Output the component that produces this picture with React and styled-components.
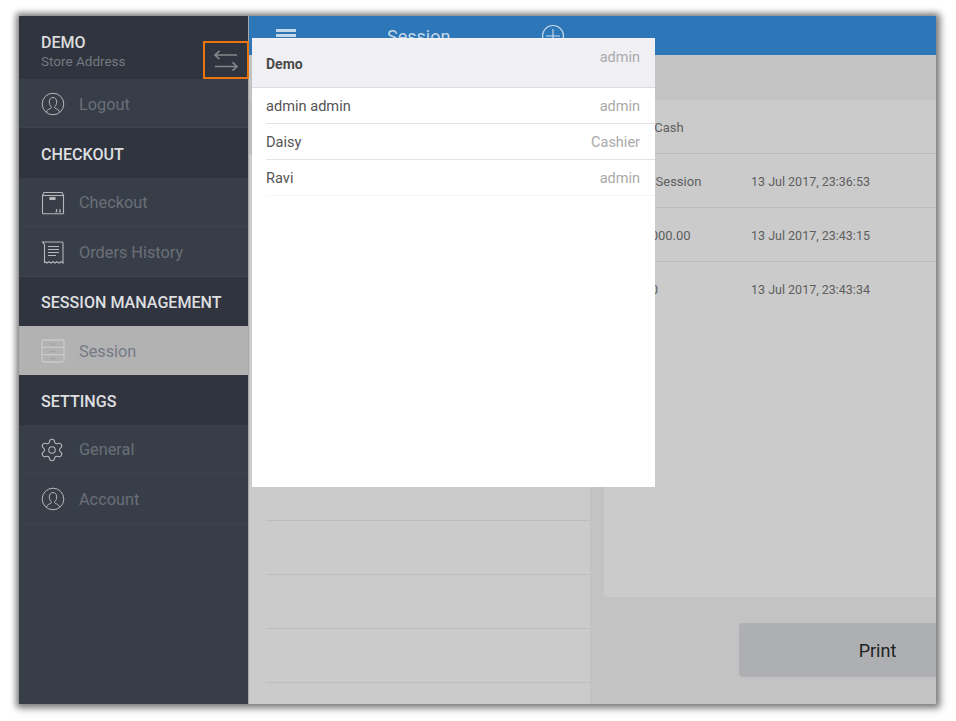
import React from "react";
import styled, { createGlobalStyle } from "styled-components";
import { Settings } from "lucide-react";

const Global = createGlobalStyle`
  html, body { margin: 0; padding: 0; background: #fff; }
  body { font-family: "Roboto", "Liberation Sans", sans-serif; }
`;
const Page = styled.div`
  width: 956px;
  height: 721px;
  padding: 16px 20px 17px 19px;
  box-sizing: border-box;
  overflow: hidden;
`;
const Frame = styled.div`
  position: relative;
  display: flex;
  height: 688px;
  box-shadow: 0 0 6px 3px rgba(0, 0, 0, 0.38), 2px 2px 8px 3px rgba(0, 0, 0, 0.26);
`;
const Sidebar = styled.aside`
  width: 229px;
  flex: none;
  background: #383e48;
  border-right: 1px solid #a8a8a8;
`;
const StoreHead = styled.div`
  height: 63px;
  box-sizing: border-box;
  padding: 17px 22px 0;
  background: #2f343e;
`;
const StoreName = styled.div`
  font-size: 16px;
  line-height: 19px;
  font-weight: 500;
  color: #dcdcdc;
`;
const StoreAddress = styled.div`
  font-size: 13.5px;
  line-height: 19px;
  color: #747981;
`;
const SwitchBox = styled.div`
  position: absolute;
  left: 184px;
  top: 25px;
  width: 46px;
  height: 38px;
  box-sizing: border-box;
  border: 2px solid #e8750f;
  display: flex;
  align-items: center;
  justify-content: center;
  z-index: 3;
`;
const Section = styled.div`
  height: 49.4px;
  box-sizing: border-box;
  padding: 2px 0 0 22px;
  display: flex;
  align-items: center;
  background: #2f343e;
  color: #dedfe0;
  font-size: 16.1px;
  font-weight: 500;
`;
const Item = styled.div`
  height: 49.4px;
  box-sizing: border-box;
  padding: 2px 0 0 22px;
  display: flex;
  align-items: center;
  gap: 14px;
  background: ${(p) => (p.$active ? "#b2b2b2" : "#383e48")};
  border-bottom: 1px solid ${(p) => (p.$active ? "#b2b2b2" : "#3e444e")};
  color: ${(p) => (p.$active ? "#757a84" : "#6a6f78")};
  font-size: 16.3px;
  svg { flex: none; color: ${(p) => (p.$active ? "#cacaca" : "#b4b6b9")}; }
`;
const Main = styled.main`
  flex: 1;
  min-width: 0;
  display: flex;
  flex-direction: column;
  background: #c3c3c3;
`;
const TopBar = styled.header`
  height: 39px;
  flex: none;
  display: flex;
  background: #2d76b8;
  position: relative;
`;
const MenuBars = styled.div`
  position: absolute;
  left: 27px;
  top: 13px;
  width: 20px;
  height: 10px;
  background: repeating-linear-gradient(#c5d8ea 0 3px, #2d76b8 3px 5px);
`;
const Title = styled.div`
  position: absolute;
  left: 138px;
  top: 10px;
  font-size: 18px;
  line-height: 22px;
  color: #c3d6e8;
`;
const AddIcon = styled.svg`
  position: absolute;
  left: 292px;
  top: 8px;
`;
const SubBar = styled.div`
  height: 45px;
  flex: none;
`;
const Body = styled.div`
  flex: 1;
  min-height: 0;
  display: flex;
`;
const SessionList = styled.div`
  width: 341px;
  flex: none;
  padding-left: 17px;
  box-sizing: border-box;
  background: #cbcbcb;
  overflow: hidden;
`;
const ListRow = styled.div`
  height: 54px;
  box-sizing: border-box;
  border-bottom: 1px solid #bdbdbd;
  &:first-child {
    margin-left: -17px;
    background: #bdbdbd;
  }
  &:nth-child(2) { height: 43px; }
`;
const Detail = styled.div`
  flex: 1;
  min-width: 0;
  display: flex;
  flex-direction: column;
  padding-left: 13px;
  border-left: 1px solid #c0c0c2;
  overflow: hidden;
`;
const DetailPanel = styled.div`
  height: 497px;
  background: #cbcbcb;
  border-radius: 4px 0 0 4px;
`;
const DetailRow = styled.div`
  height: 54px;
  box-sizing: border-box;
  padding: 1px 0 0 18px;
  display: grid;
  grid-template-columns: 129px 1fr;
  align-items: center;
  border-bottom: 1px solid #bcbcbc;
  font-size: 12.5px;
  color: #5e5e5e;
  &:last-child { border-bottom: 0; }
`;
const RowLabel = styled.span`
  font-size: 13px;
`;
const PrintWrap = styled.div`
  padding: 26px 0 0 135px;
`;
const PrintButton = styled.div`
  height: 54px;
  margin-right: -80px;
  background: #aeafb2;
  border-radius: 4px 0 0 4px;
  display: flex;
  align-items: center;
  justify-content: center;
  font-size: 18px;
  color: #222;
`;
const Popover = styled.div`
  position: absolute;
  left: 233px;
  top: 22px;
  width: 403px;
  height: 449px;
  background: #fff;
  z-index: 2;
  border-top: 1px solid #f4f4f6;
  box-sizing: border-box;
`;
const PopHead = styled.div`
  height: 49px;
  box-sizing: border-box;
  padding: 0 15px 0 14px;
  display: flex;
  justify-content: space-between;
  background: #efeff4;
  border-bottom: 1px solid #dcdce0;
`;
const PopName = styled.span`
  font-size: 14px;
  font-weight: 700;
  color: #4a4a4a;
  line-height: 50px;
`;
const PopRows = styled.div`
  padding-left: 14px;
`;
const PopRow = styled.div`
  height: 36px;
  box-sizing: border-box;
  padding: 1px 15px 0 0;
  display: flex;
  align-items: center;
  justify-content: space-between;
  border-bottom: 1px solid ${(p) => (p.$last ? "#f6f6f6" : "#e3e3e3")};
  font-size: 14.6px;
  color: #555;
`;
const Role = styled.span`
  font-size: 14.5px;
  color: #aaa;
  line-height: ${(p) => (p.$head ? "37px" : "normal")};
`;
const GearIcon = styled(Settings)`
  margin: -1px 0 -1px -2px;
`;

const UserIcon = () => (
  <svg width="24" height="24" viewBox="0 0 24 24" fill="none" stroke="currentColor" strokeWidth="1">
    <circle cx="12" cy="12" r="10.8" />
    <path d="M5.5 20c.6-2.3 2.4-2.9 4.300-3.600.6-.3.8-1 .4-1.600-1.300-1.500-1.900-3-1.900-4.900C8.300 7.300 9.900 5.500 12 5.500s3.700 1.800 3.700 4.400c0 1.900-.6 3.400-1.900 4.900-.4.6-.2 1.300.4 1.600 1.900.7 3.700 1.300 4.300 3.600" />
  </svg>
);
const BoxIcon = () => (
  <svg width="24" height="24" viewBox="0 0 24 24" fill="none" stroke="currentColor" strokeWidth="1.100">
    <path d="M1.500 4.500 3 1.500h18l1.500 3v17.500a.8.800 0 0 1-.8.800H2.300a.8.800 0 0 1-.8-.8z" />
    <path d="M1.500 4.500h21" />
    <path d="M9 6.500h5v2H9z" fill="currentColor" />
    <path d="M15.500 18v2.500M19 18v2.500M14.500 20.800h2M18 20.800h2" />
  </svg>
);
const ReceiptIcon = () => (
  <svg width="24" height="24" viewBox="0 0 24 24" fill="none" stroke="currentColor" strokeWidth="1.100">
    <path d="M1.500 2h19.500a1 1 0 0 1 1 1v20l-2-1.300-2 1.300-2-1.300-2 1.300-2-1.300-2 1.300-2-1.300-2 1.300-2-1.300L3.500 23V4.500z" />
    <path d="M7 6.500h11M7 9.500h11M7 12.500h11M7 15.500h8" />
  </svg>
);
const DrawerIcon = () => (
  <svg width="24" height="24" viewBox="0 0 24 24" fill="none" stroke="currentColor" strokeWidth="1.300">
    <rect x="1" y="1" width="22" height="22" rx="2" />
    <path d="M1 8.300h22M1 15.700h22" />
    <path d="M9.500 4.500c.5 1 4.500 1 5 0M9.500 11.800c.5 1 4.500 1 5 0M9.500 19c.5 1 4.500 1 5 0" stroke="#9a9a9a" strokeWidth="0.900" />
  </svg>
);

const rightRows = [
  ["Total Cash", ""],
  ["Open Session", "13 Jul 2017, 23:36:53"],
  ["Rs. 1000.00", "13 Jul 2017, 23:43:15"],
  ["Rs. 00", "13 Jul 2017, 23:43:34"],
];

export default function App() {
  return (
    <Page>
      <Global />
      <Frame>
        <Sidebar>
          <StoreHead>
            <StoreName>DEMO</StoreName>
            <StoreAddress>Store Address</StoreAddress>
          </StoreHead>
          <Item><UserIcon />Logout</Item>
          <Section>CHECKOUT</Section>
          <Item><BoxIcon />Checkout</Item>
          <Item><ReceiptIcon />Orders History</Item>
          <Section>SESSION MANAGEMENT</Section>
          <Item $active><DrawerIcon />Session</Item>
          <Section>SETTINGS</Section>
          <Item><GearIcon size={26} strokeWidth={1} />General</Item>
          <Item><UserIcon />Account</Item>
        </Sidebar>
        <Main>
          <TopBar>
            <MenuBars />
            <Title>Session</Title>
            <AddIcon width="24" height="24" viewBox="0 0 24 24" fill="none" stroke="#c5d8ea" strokeWidth="1.200">
              <circle cx="12" cy="12" r="10.500" />
              <path d="M12 5v14M5 12h14" />
            </AddIcon>
          </TopBar>
          <SubBar />
          <Body>
            <SessionList>
              {Array.from({ length: 12 }, (_, i) => <ListRow key={i} />)}
            </SessionList>
            <Detail>
              <DetailPanel>
                {rightRows.map(([label, time]) => (
                  <DetailRow key={label}>
                    <RowLabel>{label}</RowLabel>
                    <span>{time}</span>
                  </DetailRow>
                ))}
              </DetailPanel>
              <PrintWrap>
                <PrintButton>Print</PrintButton>
              </PrintWrap>
            </Detail>
          </Body>
        </Main>
        <SwitchBox>
          <svg width="26" height="22" viewBox="0 0 26 22" fill="none" stroke="#85878a" strokeWidth="1.600">
            <path d="M24 6H2M6.500 1.800 2 6l4.500 4.200" />
            <path d="M2 17.500h22M19.500 13.300l4.500 4.200-4.500 4.200" />
          </svg>
        </SwitchBox>
        <Popover>
          <PopHead>
            <PopName>Demo</PopName>
            <Role $head>admin</Role>
          </PopHead>
          <PopRows>
            <PopRow><span>admin admin</span><Role>admin</Role></PopRow>
            <PopRow><span>Daisy</span><Role>Cashier</Role></PopRow>
            <PopRow $last><span>Ravi</span><Role>admin</Role></PopRow>
          </PopRows>
        </Popover>
      </Frame>
    </Page>
  );
}
